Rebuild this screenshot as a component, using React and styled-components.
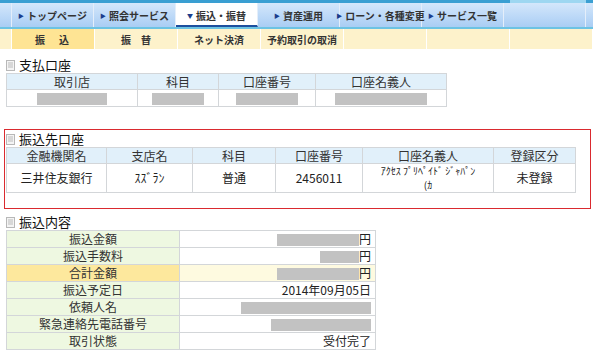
import React from 'react';
import styled, { createGlobalStyle, css } from 'styled-components';

const GlobalStyle = createGlobalStyle`
  body {
    margin: 0;
    background: #fff;
    font-family: "Noto Sans CJK JP", "Noto Sans", sans-serif;
    color: #222;
  }
`;

const tabs = ['トップページ', '照会サービス', '振込・振替', '資産運用', 'ローン・各種変更', 'サービス一覧', ''];
const subTabs = ['振\u3000込', '振\u3000替', 'ネット決済', '予約取引の取消', '', '', ''];

function DocIcon() {
  return (
    <svg width="9" height="11" viewBox="0 0 9 11">
      <rect x="0.5" y="0.5" width="8" height="10" fill="#f4f4f4" stroke="#b8b8b8" />
      <line x1="2" y1="3" x2="7" y2="3" stroke="#bbb" />
      <line x1="2" y1="5" x2="7" y2="5" stroke="#bbb" />
      <line x1="2" y1="7" x2="7" y2="7" stroke="#bbb" />
    </svg>
  );
}

function App() {
  return (
    <Page>
      <GlobalStyle />
      <TopStrip />
      <NavBar>
        <NavSpacer />
        {tabs.map((t, i) => (
          <NavTab key={i} $active={i === 2}>
            {t && <Arrow>{i === 2 ? '▼' : '▶'}</Arrow>}
            {t}
          </NavTab>
        ))}
      </NavBar>
      <SubNav>
        <SubSpacer />
        {subTabs.map((t, i) => (
          <SubTab key={i} $active={i === 0}>
            {t}
          </SubTab>
        ))}
      </SubNav>

      <Main>
        <Section>
          <Heading>
            <DocIcon />
            支払口座
          </Heading>
          <Table $width={440}>
            <colgroup>
              <col width="131" />
              <col width="81" />
              <col width="97" />
              <col width="131" />
            </colgroup>
            <thead>
              <tr>
                <Th>取引店</Th>
                <Th>科目</Th>
                <Th>口座番号</Th>
                <Th>口座名義人</Th>
              </tr>
            </thead>
            <tbody>
              <tr>
                <Td><Mask $w={70} /></Td>
                <Td><Mask $w={52} /></Td>
                <Td><Mask $w={62} /></Td>
                <Td><Mask $w={92} /></Td>
              </tr>
            </tbody>
          </Table>
        </Section>

        <AlertBox>
          <Heading>
            <DocIcon />
            振込先口座
          </Heading>
          <Table $width={569}>
            <colgroup>
              <col width="100" />
              <col width="86" />
              <col width="83" />
              <col width="87" />
              <col width="131" />
              <col width="82" />
            </colgroup>
            <thead>
              <tr>
                <Th>金融機関名</Th>
                <Th>支店名</Th>
                <Th>科目</Th>
                <Th>口座番号</Th>
                <Th>口座名義人</Th>
                <Th>登録区分</Th>
              </tr>
            </thead>
            <tbody>
              <tr>
                <Td $tall>三井住友銀行</Td>
                <Td $tall>ｽｽﾞﾗﾝ</Td>
                <Td $tall>普通</Td>
                <Td $tall>2456011</Td>
                <Td $tall $small>
                  ｱｸｾｽ ﾌﾟﾘﾍﾟｲﾄﾞ ｼﾞｬﾊﾟﾝ
                  <br />
                  (ｶ
                </Td>
                <Td $tall>未登録</Td>
              </tr>
            </tbody>
          </Table>
        </AlertBox>

        <Section>
          <Heading>
            <DocIcon />
            振込内容
          </Heading>
          <Table $width={369}>
            <colgroup>
              <col width="173" />
              <col width="196" />
            </colgroup>
            <tbody>
              <DetailRow label="振込金額" mask={82} yen />
              <DetailRow label="振込手数料" mask={39} yen />
              <DetailRow label="合計金額" mask={82} yen highlight />
              <DetailRow label="振込予定日" value="2014年09月05日" />
              <DetailRow label="依頼人名" mask={130} />
              <DetailRow label="緊急連絡先電話番号" mask={100} />
              <DetailRow label="取引状態" value="受付完了" />
            </tbody>
          </Table>
        </Section>
      </Main>
    </Page>
  );
}

function DetailRow({ label, value, mask, yen, highlight }) {
  return (
    <tr>
      <Label $hl={highlight}>{label}</Label>
      <Value $hl={highlight}>
        {mask && <Mask $w={mask} />}
        {yen && '円'}
        {value}
      </Value>
    </tr>
  );
}

export default App;

const Page = styled.div`
  width: 593px;
  height: 358px;
  overflow: hidden;
`;

const TopStrip = styled.div`
  height: 3px;
  background: linear-gradient(
    to right,
    #3a9fd2 0,
    #3a9fd2 510px,
    #9ed7f1 510px,
    #9ed7f1 586px,
    #3a9fd2 586px
  );
`;

const NavBar = styled.div`
  display: flex;
  height: 24px;
  background: linear-gradient(to bottom, #d4e7fb, #a9cdf4);
  border-bottom: 2px solid #6cc3e3;
`;

const NavSpacer = styled.div`
  width: 11px;
  border-right: 1px solid #e4eefa;
`;

const NavTab = styled.div`
  width: 82px;
  display: flex;
  align-items: center;
  justify-content: center;
  gap: 3px;
  border-right: 1px solid #e4eefa;
  font-size: 10px;
  font-weight: bold;
  color: #333;
  white-space: nowrap;
  box-sizing: border-box;
  ${(p) =>
    p.$active &&
    css`
      background: #fff;
      border-bottom: 2px solid #1d4f9e;
      padding-top: 2px;
    `}
`;

const Arrow = styled.span`
  font-size: 6px;
  color: #1b3d8c;
`;

const SubNav = styled.div`
  display: flex;
  height: 20px;
  background: #fdf2cb;
`;

const SubSpacer = styled.div`
  width: 11px;
  border-right: 1px solid #fff;
`;

const SubTab = styled.div`
  width: 82px;
  display: flex;
  align-items: center;
  justify-content: center;
  border-right: 1px solid #fff;
  font-size: 10px;
  font-weight: bold;
  color: #333;
  letter-spacing: ${(p) => (p.$active ? '2px' : '0')};
  background: ${(p) => (p.$active ? '#fee494' : 'transparent')};
`;

const Main = styled.div`
  padding: 8px 4px 0 4px;
`;

const Section = styled.section`
  padding: 0 2px;
`;

const AlertBox = styled.section`
  margin-top: 22px;
  margin-bottom: 5px;
  width: 583px;
  border: 1px solid #da2a2f;
  padding: 1px 1px 15px 1px;
`;

const Heading = styled.div`
  display: flex;
  align-items: center;
  gap: 4px;
  height: 16px;
  font-size: 13px;
  color: #111;
  line-height: 16px;
`;

const Table = styled.table`
  width: ${(p) => p.$width}px;
  table-layout: fixed;
  border-collapse: collapse;
  font-size: 12px;
  line-height: 14px;
`;

const cell = css`
  border: 1px solid #d3d6d9;
  text-align: center;
  padding: 0 3px;
  white-space: nowrap;
`;

const Th = styled.th`
  ${cell};
  height: 15px;
  font-weight: normal;
  background: #e1f0fa;
  color: #333;
`;

const Td = styled.td`
  ${cell};
  height: ${(p) => (p.$tall ? '28px' : '16px')};
  color: #222;
  font-size: ${(p) => (p.$small ? '10px' : '12px')};
  line-height: 14px;
`;

const Label = styled.td`
  ${cell};
  height: 16px;
  color: #333;
  background: ${(p) => (p.$hl ? '#fde89d' : '#eef8e1')};
`;

const Value = styled.td`
  ${cell};
  height: 16px;
  text-align: right;
  padding-right: 4px;
  background: ${(p) => (p.$hl ? '#fefae0' : '#fff')};
`;

const Mask = styled.span`
  display: inline-block;
  vertical-align: middle;
  width: ${(p) => p.$w}px;
  height: 12px;
  background: #c2c2c2;
`;
